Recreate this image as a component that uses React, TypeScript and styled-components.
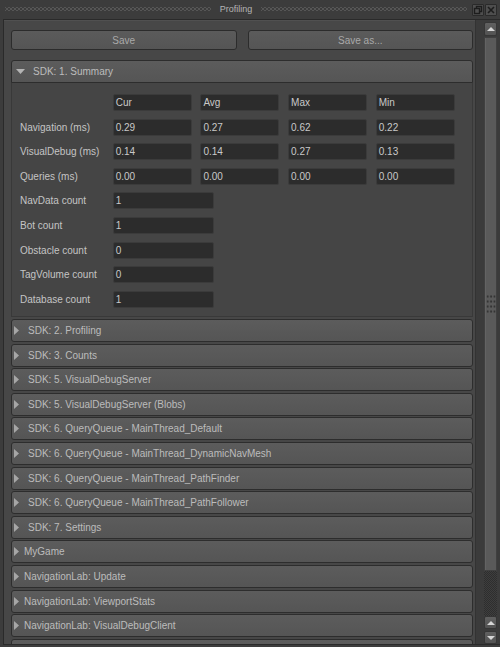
import styled, { createGlobalStyle } from 'styled-components';

const GlobalStyle = createGlobalStyle`
  html, body {
    margin: 0;
    padding: 0;
    background: #3c3c3c;
  }
  body {
    font-family: "Liberation Sans", Arial, sans-serif;
  }
`;

type Row = { label: string; values: string[] };

const timings: Row[] = [
  { label: 'Navigation (ms)', values: ['0.29', '0.27', '0.62', '0.22'] },
  { label: 'VisualDebug (ms)', values: ['0.14', '0.14', '0.27', '0.13'] },
  { label: 'Queries (ms)', values: ['0.00', '0.00', '0.00', '0.00'] },
];

const counts: Row[] = [
  { label: 'NavData count', values: ['1'] },
  { label: 'Bot count', values: ['1'] },
  { label: 'Obstacle count', values: ['0'] },
  { label: 'TagVolume count', values: ['0'] },
  { label: 'Database count', values: ['1'] },
];

const sections: { title: string; indent: number }[] = [
  { title: 'SDK: 2. Profiling', indent: 9 },
  { title: 'SDK: 3. Counts', indent: 9 },
  { title: 'SDK: 5. VisualDebugServer', indent: 9 },
  { title: 'SDK: 5. VisualDebugServer (Blobs)', indent: 9 },
  { title: 'SDK: 6. QueryQueue - MainThread_Default', indent: 9 },
  { title: 'SDK: 6. QueryQueue - MainThread_DynamicNavMesh', indent: 9 },
  { title: 'SDK: 6. QueryQueue - MainThread_PathFinder', indent: 9 },
  { title: 'SDK: 6. QueryQueue - MainThread_PathFollower', indent: 9 },
  { title: 'SDK: 7. Settings', indent: 9 },
  { title: 'MyGame', indent: 5 },
  { title: 'NavigationLab: Update', indent: 5 },
  { title: 'NavigationLab: ViewportStats', indent: 5 },
  { title: 'NavigationLab: VisualDebugClient', indent: 5 },
];

const App = () => {
  return (
    <>
      <GlobalStyle />
      <Window>
        <TitleBar>
          <Grip />
          <Title>Profiling</Title>
          <Grip />
          <TitleButtons>
            <TitleButton>
              <svg width="10" height="10" viewBox="0 0 10 10">
                <rect x="3.5" y="1.5" width="5" height="5" fill="none" stroke="#1d1d1d" strokeWidth="1.4" />
                <rect x="1.5" y="3.5" width="5" height="5" fill="#505050" stroke="#1d1d1d" strokeWidth="1.4" />
              </svg>
            </TitleButton>
            <TitleButton>
              <svg width="10" height="10" viewBox="0 0 10 10">
                <path d="M2 2 L8 8 M8 2 L2 8" stroke="#1d1d1d" strokeWidth="1.6" />
              </svg>
            </TitleButton>
          </TitleButtons>
        </TitleBar>

        <Body>
          <Panel>
            <ButtonRow>
              <ActionButton>Save</ActionButton>
              <ActionButton>Save as...</ActionButton>
            </ButtonRow>

            <SectionHeader expanded>
              <svg width="9" height="5" viewBox="0 0 9 5">
                <path d="M0 0 H9 L4.5 5 Z" fill="#b4b4b4" />
              </svg>
              <HeaderText indent={8}>SDK: 1. Summary</HeaderText>
            </SectionHeader>
            <SectionBody>
              <StatsGrid>
                <span />
                <Field>Cur</Field>
                <Field>Avg</Field>
                <Field>Max</Field>
                <Field>Min</Field>
                {timings.map((row) => (
                  <Line key={row.label} row={row} />
                ))}
                {counts.map((row) => (
                  <Line key={row.label} row={row} wide />
                ))}
              </StatsGrid>
            </SectionBody>

            <SectionList>
              {sections.map((s) => (
                <SectionHeader key={s.title}>
                  <svg width="5" height="9" viewBox="0 0 5 9">
                    <path d="M0 0 L5 4.5 L0 9 Z" fill="#a6a6a6" />
                  </svg>
                  <HeaderText indent={s.indent}>{s.title}</HeaderText>
                </SectionHeader>
              ))}
              {/* next section, cut off by the bottom edge */}
              <SectionHeader />
            </SectionList>
          </Panel>

          <ScrollBar>
            <StepButton>
              <svg width="8" height="4" viewBox="0 0 8 4">
                <path d="M0 4 L4 0 L8 4 Z" fill="#d6d6d6" />
              </svg>
            </StepButton>
            <Thumb>
              <ThumbGrip />
            </Thumb>
            <Track />
            <StepButton small>
              <svg width="8" height="4" viewBox="0 0 8 4">
                <path d="M0 4 L4 0 L8 4 Z" fill="#d6d6d6" />
              </svg>
            </StepButton>
            <StepButton small>
              <svg width="8" height="4" viewBox="0 0 8 4">
                <path d="M0 0 H8 L4 4 Z" fill="#d6d6d6" />
              </svg>
            </StepButton>
          </ScrollBar>
        </Body>
      </Window>
    </>
  );
};

const Line = ({ row, wide }: { row: Row; wide?: boolean }) => (
  <>
    <Label>{row.label}</Label>
    {row.values.map((v, i) => (
      <Field key={i} wide={wide}>
        {v}
      </Field>
    ))}
  </>
);

const Window = styled.div`
  width: 500px;
  height: 647px;
  display: flex;
  flex-direction: column;
  box-sizing: border-box;
  padding-bottom: 2px;
  background: #3c3c3c;
  overflow: hidden;
`;

const TitleBar = styled.div`
  height: 19px;
  flex-shrink: 0;
  display: flex;
  align-items: center;
  gap: 9px;
  padding: 0 3px 0 5px;
  box-sizing: border-box;
`;

const Grip = styled.div`
  flex: 1;
  height: 4px;
  margin-top: -2px;
  background-image: radial-gradient(circle, #565656 0.8px, transparent 1.3px),
    radial-gradient(circle, #565656 0.8px, transparent 1.3px);
  background-size: 4px 4px, 4px 4px;
  background-position: 0 0, 2px 2px;
`;

const Title = styled.span`
  font-size: 9px;
  color: #b4b4b4;
  margin-top: -2px;
`;

const TitleButtons = styled.div`
  display: flex;
  gap: 1px;
  margin-left: -4px;
`;

const TitleButton = styled.div`
  width: 12px;
  height: 12px;
  box-sizing: border-box;
  display: flex;
  align-items: center;
  justify-content: center;
  background: #4e4e4e;
  border: 1px solid #2a2a2a;
  border-radius: 1px;
`;

const Body = styled.div`
  flex: 1;
  min-height: 0;
  display: flex;
  margin-left: 3px;
  border-top: 1px solid #2a2a2a;
  border-left: 1px solid #2a2a2a;
  border-bottom: 1px solid #2a2a2a;
`;

const Panel = styled.div`
  flex: 1;
  min-width: 0;
  display: flex;
  flex-direction: column;
  padding: 10px 2px 0 7px;
  background: #474747;
  box-shadow: inset 0 1px 0 #505050;
  overflow: hidden;
`;

const ButtonRow = styled.div`
  display: grid;
  grid-template-columns: 1fr 1fr;
  column-gap: 11px;
  flex-shrink: 0;
`;

const ActionButton = styled.div`
  height: 20px;
  box-sizing: border-box;
  display: flex;
  align-items: center;
  justify-content: center;
  font-size: 10px;
  color: #a9a9a9;
  background: linear-gradient(#5b5b5b, #555555);
  border: 1px solid #2c2c2c;
  border-radius: 3px;
`;

const SectionHeader = styled.div<{ expanded?: boolean }>`
  height: 23px;
  flex-shrink: 0;
  box-sizing: border-box;
  display: flex;
  align-items: center;
  padding-left: ${({ expanded }) => (expanded ? '4px' : '2px')};
  margin-top: ${({ expanded }) => (expanded ? '10px' : '0')};
  background: linear-gradient(#5c5c5c, #555555);
  border: 1px solid #2d2d2d;
  border-radius: ${({ expanded }) => (expanded ? '3px 3px 0 0' : '3px')};
  white-space: nowrap;
`;

const HeaderText = styled.span<{ indent: number }>`
  margin-left: ${({ indent }) => indent}px;
  font-size: 10px;
  color: #bcbcbc;
`;

const SectionBody = styled.div`
  height: 234px;
  flex-shrink: 0;
  box-sizing: border-box;
  padding: 11px 0 0 8px;
  background: #454545;
  border: 1px solid #393939;
  border-top: none;
`;

const StatsGrid = styled.div`
  display: grid;
  grid-template-columns: 84px repeat(4, 79px);
  grid-auto-rows: 17px;
  column-gap: 8.7px;
  row-gap: 7.6px;
`;

const Label = styled.span`
  grid-column: 1;
  align-self: center;
  font-size: 10px;
  color: #c4c4c4;
  white-space: nowrap;
`;

const Field = styled.div<{ wide?: boolean }>`
  box-sizing: border-box;
  width: ${({ wide }) => (wide ? '101px' : 'auto')};
  grid-column: ${({ wide }) => (wide ? '2 / span 2' : 'auto')};
  display: flex;
  align-items: center;
  padding-left: 2px;
  font-size: 10px;
  color: #c9c9c9;
  background: #2c2c2c;
  border: 1px solid #3b3b3b;
  border-radius: 2px;
`;

const SectionList = styled.div`
  display: flex;
  flex-direction: column;
  gap: 1.6px;
  margin-top: 2px;
`;

const ScrollBar = styled.div`
  width: 25px;
  flex-shrink: 0;
  box-sizing: border-box;
  display: flex;
  flex-direction: column;
  padding: 2px 3px 0 8px;
  background: #3b3b3b;
  border-left: 1px solid #333333;
`;

const StepButton = styled.div<{ small?: boolean }>`
  height: ${({ small }) => (small ? '13px' : '14px')};
  margin-top: ${({ small }) => (small ? '2px' : '0')};
  flex-shrink: 0;
  box-sizing: border-box;
  display: flex;
  align-items: center;
  justify-content: center;
  background: linear-gradient(#606060, #535353);
  border: 1px solid #363636;
  border-radius: 2px;
`;

const Thumb = styled.div`
  height: 534px;
  margin-top: 1px;
  flex-shrink: 0;
  box-sizing: border-box;
  display: flex;
  align-items: center;
  justify-content: center;
  background: #5a5a5a;
  border: 1px solid #404040;
  box-shadow: inset 1px 0 0 #636363;
`;

const ThumbGrip = styled.div`
  width: 10px;
  height: 20px;
  background-image: radial-gradient(circle, #353535 0.9px, transparent 1.3px);
  background-size: 3.4px 5px;
`;

const Track = styled.div`
  flex: 1;
  margin-bottom: -2px;
  background-color: #383838;
  background-image: repeating-conic-gradient(#2e2e2e 0 25%, #3e3e3e 0 50%);
  background-size: 2px 2px;
`;

export default App;
